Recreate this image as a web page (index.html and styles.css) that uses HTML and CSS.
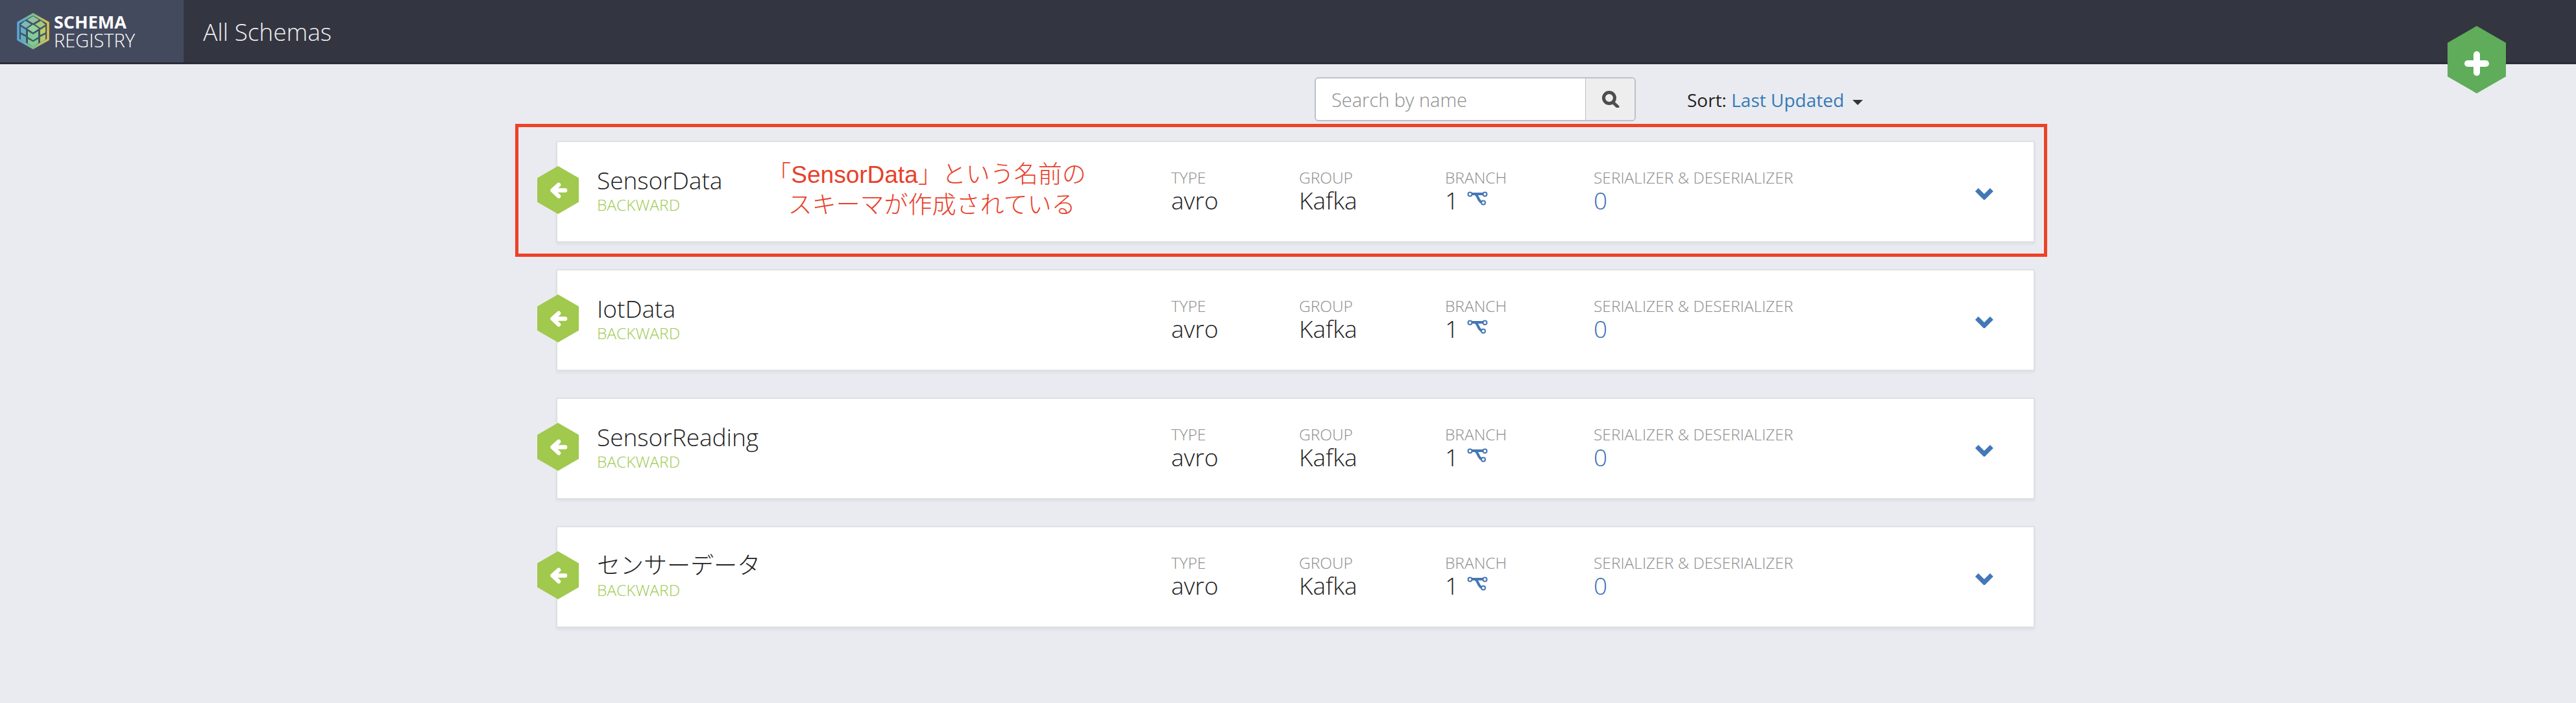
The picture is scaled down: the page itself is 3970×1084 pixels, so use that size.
FILE: index.html
```html
<!DOCTYPE html>
<html lang="ja">
<head>
    <meta charset="UTF-8">
    <title>Schema Registry</title>
    <link rel="stylesheet" href="styles.css">
</head>
<body>
    <svg class="icon-defs" width="0" height="0">
        <symbol id="hex-back" viewBox="0 0 64 74">
            <polygon points="32,0 64,18.5 64,55.5 32,74 0,55.5 0,18.5" fill="#a0c94d"/>
            <path d="M33 29 L23.5 37.5 L33 46.5 M24 37.5 H43" fill="none" stroke="#fff" stroke-width="6.5" stroke-linecap="round" stroke-linejoin="round"/>
        </symbol>
        <symbol id="branch" viewBox="0 0 32 22">
            <path d="M6 4 H25 M12 4 C17 5 17 16 23 17" fill="none" stroke="#4477b5" stroke-width="4"/>
            <circle cx="4.5" cy="4.5" r="3" fill="#fff" stroke="#4477b5" stroke-width="2"/>
            <circle cx="27.5" cy="4.5" r="3" fill="#fff" stroke="#4477b5" stroke-width="2"/>
            <circle cx="25" cy="17.5" r="3" fill="#fff" stroke="#4477b5" stroke-width="2"/>
        </symbol>
        <symbol id="chevron" viewBox="0 0 30 19">
            <path d="M3.5 3.5 L15 15 L26.500 3.500" fill="none" stroke="#4477b5" stroke-width="7"/>
        </symbol>
    </svg>

    <header class="topbar">
        <a class="brand" href="#">
            <svg class="brand-logo" viewBox="0 0 50 56">
                <defs>
                    <linearGradient id="logo-edge" x1="0" y1="0" x2="1" y2="0">
                        <stop offset="0" stop-color="#5aa5dc"/>
                        <stop offset="0.5" stop-color="#7fc08f"/>
                        <stop offset="1" stop-color="#e0bf50"/>
                    </linearGradient>
                </defs>
                <polygon points="25,2 48,15 48,41 25,54 2,41 2,15" fill="#3f5763" stroke="url(#logo-edge)" stroke-width="3.500"/>
                <polygon points="25,5 34,10.500 25,16 16,10.500" fill="#8ec4a0"/>
                <polygon points="13,12 22,17.500 14,23 6,18" fill="#7fb9b9"/>
                <polygon points="37,12 44,18 36,23 28,17.500" fill="#a9c77c"/>
                <polygon points="25,18 34,24 25,30 16,24" fill="#93d3a0"/>
                <path d="M6 21 L14 26 V34 L6 30Z" fill="#67adc9"/>
                <path d="M44 21 L36 26 V34 L44 30Z" fill="#bfca6a"/>
                <path d="M17 28 L25 33 L33 28 V37 L25 42 L17 37Z" fill="#80cb9a"/>
                <path d="M6 33 L14 37 V46 L6 41Z" fill="#66afba"/>
                <path d="M44 33 L36 37 V46 L44 41Z" fill="#b2c970"/>
                <path d="M17 40 L25 44.500 L33 40 V47 L25 52 L17 47Z" fill="#84c890"/>
            </svg>
            <span class="brand-text"><b>SCHEMA</b><span>REGISTRY</span></span>
        </a>
        <h1 class="page-title">All Schemas</h1>
    </header>

    <button class="add-btn" type="button" aria-label="Add schema">
        <svg viewBox="0 0 90 104">
            <polygon points="45,0 90,26 90,78 45,104 0,78 0,26" fill="#5fad5a"/>
            <path d="M45 44 V72 M31 58 H59" stroke="#fff" stroke-width="10" stroke-linecap="round"/>
        </svg>
    </button>

    <main class="content">
        <div class="toolbar">
            <div class="search">
                <input class="search-input" type="text" placeholder="Search by name">
                <span class="search-btn">
                    <svg viewBox="0 0 28 26" width="28" height="26">
                        <circle cx="12" cy="11" r="8.500" fill="none" stroke="#4d4d4d" stroke-width="5"/>
                        <path d="M18 18 L25 24.500" stroke="#4d4d4d" stroke-width="5" stroke-linecap="round"/>
                    </svg>
                </span>
            </div>
            <div class="sort">Sort: <a href="#">Last Updated</a><i class="caret"></i></div>
        </div>

        <section class="schema-list">
            <article class="schema-card is-marked">
                <svg class="compat-hex"><use href="#hex-back"/></svg>
                <div class="schema-name"><h2>SensorData</h2><small>BACKWARD</small></div>
                <p class="note">「SensorData」という名前の<br>スキーマが作成されている</p>
                <div class="meta"><label>TYPE</label><span>avro</span></div>
                <div class="meta"><label>GROUP</label><span>Kafka</span></div>
                <div class="meta"><label>BRANCH</label><span>1<svg class="branch-icon"><use href="#branch"/></svg></span></div>
                <div class="meta"><label>SERIALIZER &amp; DESERIALIZER</label><a href="#">0</a></div>
                <svg class="chevron"><use href="#chevron"/></svg>
            </article>
            <article class="schema-card">
                <svg class="compat-hex"><use href="#hex-back"/></svg>
                <div class="schema-name"><h2>IotData</h2><small>BACKWARD</small></div>
                <div class="meta"><label>TYPE</label><span>avro</span></div>
                <div class="meta"><label>GROUP</label><span>Kafka</span></div>
                <div class="meta"><label>BRANCH</label><span>1<svg class="branch-icon"><use href="#branch"/></svg></span></div>
                <div class="meta"><label>SERIALIZER &amp; DESERIALIZER</label><a href="#">0</a></div>
                <svg class="chevron"><use href="#chevron"/></svg>
            </article>
            <article class="schema-card">
                <svg class="compat-hex"><use href="#hex-back"/></svg>
                <div class="schema-name"><h2>SensorReading</h2><small>BACKWARD</small></div>
                <div class="meta"><label>TYPE</label><span>avro</span></div>
                <div class="meta"><label>GROUP</label><span>Kafka</span></div>
                <div class="meta"><label>BRANCH</label><span>1<svg class="branch-icon"><use href="#branch"/></svg></span></div>
                <div class="meta"><label>SERIALIZER &amp; DESERIALIZER</label><a href="#">0</a></div>
                <svg class="chevron"><use href="#chevron"/></svg>
            </article>
            <article class="schema-card">
                <svg class="compat-hex"><use href="#hex-back"/></svg>
                <div class="schema-name"><h2 class="name-jp">センサーデータ</h2><small>BACKWARD</small></div>
                <div class="meta"><label>TYPE</label><span>avro</span></div>
                <div class="meta"><label>GROUP</label><span>Kafka</span></div>
                <div class="meta"><label>BRANCH</label><span>1<svg class="branch-icon"><use href="#branch"/></svg></span></div>
                <div class="meta"><label>SERIALIZER &amp; DESERIALIZER</label><a href="#">0</a></div>
                <svg class="chevron"><use href="#chevron"/></svg>
            </article>
        </section>
    </main>
</body>
</html>
```

FILE: styles.css
```css
body {
    margin: 0;
    height: 1084px;
    overflow: hidden;
    position: relative;
    background: #eaebf0;
    color: #222;
    font-family: "Open Sans", "Noto Sans CJK JP", sans-serif;
    font-weight: 300;
}

a {
    color: #3b70b2;
    text-decoration: none;
}

.icon-defs {
    position: absolute;
}

/* top bar */
.topbar {
    display: flex;
    align-items: stretch;
    height: 96px;
    background: #333541;
    border-bottom: 3px solid #2b2c38;
}

.brand {
    display: flex;
    align-items: center;
    gap: 7px;
    width: 283px;
    box-sizing: border-box;
    padding-left: 26px;
    background: #444a5e;
    color: #fff;
}

.brand-logo {
    width: 50px;
    height: 56px;
}

.brand-text {
    display: flex;
    flex-direction: column;
    font-size: 29px;
    line-height: 28px;
}

.brand-text b {
    font-size: 27px;
    font-weight: 700;
}

.page-title {
    margin: 0 0 0 30px;
    align-self: center;
    color: #f0f0f0;
    font-size: 37px;
    font-weight: 300;
}

/* add button, hangs over the header edge */
.add-btn {
    position: absolute;
    left: 3772px;
    top: 40px;
    width: 90px;
    height: 104px;
    padding: 0;
    border: 0;
    background: none;
}

.add-btn svg {
    display: block;
    width: 90px;
    height: 104px;
}

.content {
    width: 2279px;
    margin-left: 857px;
}

/* search and sort */
.toolbar {
    display: flex;
    align-items: center;
    height: 68px;
    margin-top: 20px;
    margin-bottom: 30px;
    padding-left: 1169px;
    font-size: 28px;
}

.search {
    display: flex;
    width: 495px;
    height: 68px;
    box-sizing: border-box;
    border: 2px solid #bcc1cb;
    border-radius: 6px;
    overflow: hidden;
}

.search-input {
    width: 416px;
    box-sizing: border-box;
    padding: 0 0 0 24px;
    border: 0;
    border-right: 1px solid #bcc1cb;
    background: #fff;
    font-family: inherit;
    font-size: 29px;
    font-weight: 300;
}

.search-input::placeholder {
    color: #8c8c8c;
    opacity: 1;
}

.search-btn {
    flex: 1;
    display: flex;
    align-items: center;
    justify-content: center;
    background: #eee;
}

.sort {
    margin-left: 79px;
    padding-top: 2px;
    font-weight: 400;
}

.sort a {
    color: #337ab7;
}

.caret {
    display: inline-block;
    margin-left: 13px;
    vertical-align: middle;
    border-top: 8px solid #333;
    border-left: 8px solid transparent;
    border-right: 8px solid transparent;
}

/* schema rows */
.schema-list {
    display: flex;
    flex-direction: column;
    gap: 41px;
}

.schema-card {
    position: relative;
    display: grid;
    grid-template-columns: 885px 197px 225px 229px 1fr;
    align-items: start;
    height: 157px;
    box-sizing: border-box;
    padding-left: 61px;
    padding-top: 36px;
    background: #fff;
    border: 2px solid #dfe0e3;
    box-shadow: 0 3px 4px rgba(0, 0, 0, 0.05);
}

/* red annotation frame */
.schema-card.is-marked::after {
    content: "";
    position: absolute;
    left: -65px;
    right: -21px;
    top: -28px;
    bottom: -24px;
    border: 5px solid #ee4126;
    pointer-events: none;
}

.compat-hex {
    position: absolute;
    left: -31px;
    top: 37px;
    width: 64px;
    height: 74px;
}

.schema-name h2 {
    margin: 0;
    font-size: 37px;
    font-weight: 300;
    line-height: 46px;
}

.schema-name h2.name-jp {
    font-size: 36px;
}

.schema-name small {
    display: block;
    color: #9bc94c;
    font-size: 24.5px;
    line-height: 30px;
}

.note {
    position: absolute;
    left: 277px;
    top: 27px;
    width: 600px;
    margin: 0;
    color: #e8402a;
    font-family: "Liberation Sans", "Noto Sans CJK JP", sans-serif;
    font-size: 37px;
    font-weight: 300;
    line-height: 47px;
    text-align: center;
    text-indent: -16px;
    white-space: nowrap;
}

.meta label {
    display: block;
    padding-top: 6px;
    color: #8c8c8c;
    font-size: 24.5px;
    line-height: 26px;
}

.meta span,
.meta a {
    display: flex;
    align-items: center;
    font-size: 37px;
    line-height: 44px;
}

.branch-icon {
    width: 32px;
    height: 22px;
    margin-left: 13px;
    margin-top: -6px;
}

.chevron {
    position: absolute;
    left: 2184px;
    top: 70px;
    width: 30px;
    height: 19px;
}
```
